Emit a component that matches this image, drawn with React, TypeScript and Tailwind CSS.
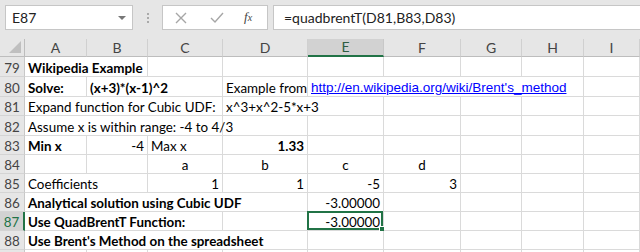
import type { ReactNode } from 'react';

const COLS = ['A', 'B', 'C', 'D', 'E', 'F', 'G', 'H', 'I'];
const GRID = 'grid grid-cols-[25px_62px_61px_75px_85px_76px_77px_61px_62px_56px]';

interface CellProps {
  span?: 1 | 2 | 3 | 4;
  align?: 'left' | 'right' | 'center';
  bold?: boolean;
  active?: boolean;
  children?: ReactNode;
}

function Cell({ span = 1, align = 'left', bold, active, children }: CellProps) {
  const spanCls = { 1: 'col-span-1', 2: 'col-span-2', 3: 'col-span-3', 4: 'col-span-4' }[span];
  const alignCls = { left: 'justify-start', right: 'justify-end', center: 'justify-center' }[align];
  return (
    <div
      className={`${spanCls} ${alignCls} relative flex items-end px-[3px] border-r border-b border-[#dadada] whitespace-nowrap text-black ${bold ? 'font-bold' : ''}`}
    >
      {children}
      {/* Selection frame on the active cell */}
      {active && (
        <div className="absolute -left-[1px] -top-[1px] right-0 bottom-0 border-2 border-[#217346]">
          <div className="absolute -right-[4px] -bottom-[4px] w-[6px] h-[6px] bg-[#217346] border border-white" />
        </div>
      )}
    </div>
  );
}

interface RowProps {
  n?: number;
  h: string;
  selected?: boolean;
  children: ReactNode;
}

function Row({ n, h, selected, children }: RowProps) {
  return (
    <div className={`${GRID} ${h}`}>
      <div
        className={`flex items-end justify-center border-b border-[#d4d4d4] text-[#444] ${
          selected ? 'bg-[#d2d2d2] border-r-2 border-r-[#217346] text-[#217346]' : 'bg-[#e6e6e6] border-r border-r-[#c8c8c8]'
        }`}
      >
        {n}
      </div>
      {children}
    </div>
  );
}

function Empty({ count }: { count: number }) {
  return (
    <>
      {Array.from({ length: count }).map((_, i) => (
        <Cell key={i} />
      ))}
    </>
  );
}

export default function App() {
  return (
    <div className="w-[640px] h-[252px] overflow-hidden bg-white text-[13.4px] leading-[16px] font-['Lato','Liberation_Sans',sans-serif]">
      {/* Formula bar */}
      <div className="h-[39px] bg-[#e6e6e6] flex items-start pt-[5px] text-[14px]">
        <div className="ml-[5px] w-[128px] h-[25px] bg-white border border-[#c6c6c6] flex items-center justify-between pl-[6px] pr-[6px] text-[#222]">
          <span>E87</span>
          <span className="w-0 h-0 border-l-[4px] border-r-[4px] border-t-[4px] border-l-transparent border-r-transparent border-t-[#777]" />
        </div>
        <div className="w-[29px] h-[25px] flex flex-col items-center justify-center gap-[2px]">
          <span className="w-[2px] h-[2px] bg-[#aaa]" />
          <span className="w-[2px] h-[2px] bg-[#aaa]" />
          <span className="w-[2px] h-[2px] bg-[#aaa]" />
        </div>
        <div className="w-[106px] h-[25px] bg-white border border-[#c6c6c6] flex items-center">
          <svg width="12" height="12" viewBox="0 0 12 12" className="ml-[12px]">
            <path d="M1 1 L11 11 M11 1 L1 11" stroke="#a6a6a6" strokeWidth="1.4" fill="none" />
          </svg>
          <svg width="14" height="12" viewBox="0 0 14 12" className="ml-[23px]">
            <path d="M1 6 L5 10 L13 1" stroke="#a6a6a6" strokeWidth="1.4" fill="none" />
          </svg>
          <span className="ml-[20px] italic text-[13px] text-[#444] font-['Liberation_Serif',serif]">
            f<span className="text-[10px]">x</span>
          </span>
        </div>
        <div className="ml-[5px] flex-1 h-[25px] bg-white border-y border-l border-[#c6c6c6] flex items-center pl-[10px] text-[#222]">
          =quadbrentT(D81,B83,D83)
        </div>
      </div>

      {/* Column headers */}
      <div className={`${GRID} h-[18px] bg-[#e6e6e6] text-[#444] text-[14px]`}>
        <div className="relative border-r border-b border-[#bdbdbd]">
          <svg width="12" height="12" viewBox="0 0 12 12" className="absolute right-[3px] bottom-[3px]">
            <path d="M12 0 L12 12 L0 12 Z" fill="#bfbfbf" />
          </svg>
        </div>
        {COLS.map((c) =>
          c === 'E' ? (
            <div key={c} className="flex items-center justify-center bg-[#d2d2d2] border-r border-[#c8c8c8] border-b-2 border-b-[#217346] text-[#2f5d41]">
              {c}
            </div>
          ) : (
            <div key={c} className="flex items-center justify-center border-r border-[#d0d0d0] border-b border-b-[#bdbdbd]">
              {c}
            </div>
          ),
        )}
      </div>

      {/* Sheet rows */}
      <Row n={79} h="h-[20px]">
        <Cell span={2} bold>Wikipedia Example</Cell>
        <Empty count={7} />
      </Row>
      <Row n={80} h="h-[20px]">
        <Cell bold>Solve:</Cell>
        <Cell span={2} bold>(x+3)*(x-1)^2</Cell>
        <Cell>Example from</Cell>
        <Cell span={4}>
          <span className="text-[13.5px] text-[#0000ff] underline font-['Liberation_Sans',sans-serif]">
            http://en.wikipedia.org/wiki/Brent's_method
          </span>
        </Cell>
        <Empty count={1} />
      </Row>
      <Row n={81} h="h-[19px]">
        <Cell span={3}>Expand function for Cubic UDF:</Cell>
        <Cell span={2}>x^3+x^2-5*x+3</Cell>
        <Empty count={4} />
      </Row>
      <Row n={82} h="h-[20px]">
        <Cell span={3}>Assume x is within range: -4 to 4/3</Cell>
        <Empty count={6} />
      </Row>
      <Row n={83} h="h-[19px]">
        <Cell bold>Min x</Cell>
        <Cell align="right">-4</Cell>
        <Cell>Max x</Cell>
        <Cell align="right" bold>1.33</Cell>
        <Empty count={5} />
      </Row>
      <Row n={84} h="h-[19px]">
        <Empty count={2} />
        <Cell align="center">a</Cell>
        <Cell align="center">b</Cell>
        <Cell align="center">c</Cell>
        <Cell align="center">d</Cell>
        <Empty count={3} />
      </Row>
      <Row n={85} h="h-[19px]">
        <Cell span={2}>Coefficients</Cell>
        <Cell align="right">1</Cell>
        <Cell align="right">1</Cell>
        <Cell align="right">-5</Cell>
        <Cell align="right">3</Cell>
        <Empty count={3} />
      </Row>
      <Row n={86} h="h-[19px]">
        <Cell span={4} bold>Analytical solution using Cubic UDF</Cell>
        <Cell align="right">-3.00000</Cell>
        <Empty count={4} />
      </Row>
      <Row n={87} h="h-[19px]" selected>
        <Cell span={3} bold>Use QuadBrentT Function:</Cell>
        <Cell />
        <Cell align="right" active>-3.00000</Cell>
        <Empty count={4} />
      </Row>
      <Row n={88} h="h-[19px]">
        <Cell span={4} bold>Use Brent's Method on the spreadsheet</Cell>
        <Empty count={5} />
      </Row>
      <Row h="h-[19px]">
        <Empty count={9} />
      </Row>
    </div>
  );
}
